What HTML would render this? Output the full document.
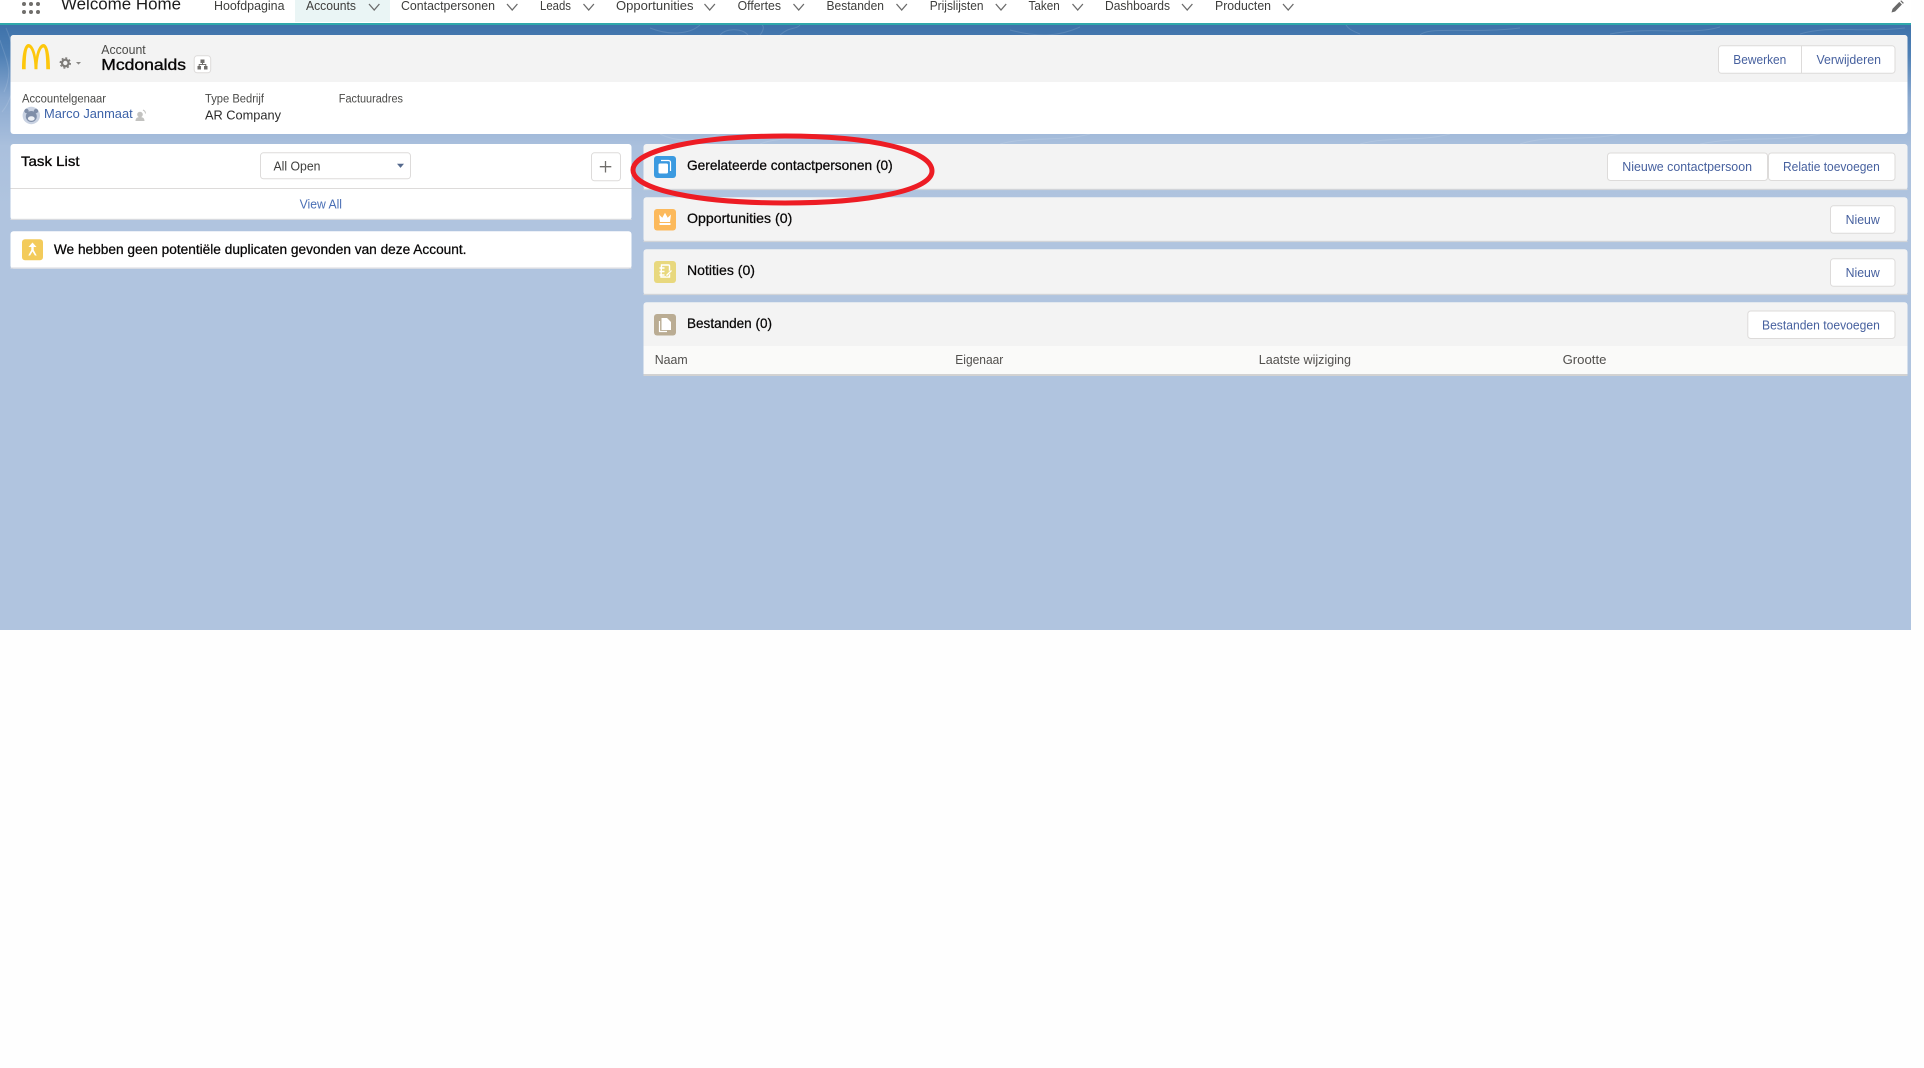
<!DOCTYPE html>
<html lang="nl">
<head>
<meta charset="utf-8">
<title>Mcdonalds</title>
<style>
html,body{margin:0;padding:0;background:#fff;width:1924px;height:1068px;overflow:hidden}
svg{display:block;filter:blur(.3px)}
text{font-family:"Liberation Sans",sans-serif}
.nav{font-size:13px;fill:#3e3e3c}
.lbl{font-size:11.5px;fill:#4a4a48}
.btn{font-size:13px;fill:#47619f}
.ttl{font-size:14px;fill:#080707;stroke:#080707;stroke-width:.25}
.th{font-size:12.5px;fill:#514f4d}
.chev{fill:none;stroke:#6b6b6b;stroke-width:1.3}
</style>
</head>
<body>
<svg xmlns="http://www.w3.org/2000/svg" width="1924" height="1068" viewBox="0 0 1924 1068">
<defs>
<linearGradient id="bg" x1="0" y1="25" x2="0" y2="630" gradientUnits="userSpaceOnUse">
<stop offset="0" stop-color="#3e72aa"/>
<stop offset=".05" stop-color="#4f80b5"/>
<stop offset=".12" stop-color="#8aa9d0"/>
<stop offset=".2" stop-color="#aac0dd"/>
<stop offset=".3" stop-color="#b0c4df"/>
<stop offset="1" stop-color="#b0c4df"/>
</linearGradient>
</defs>

<rect width="1924" height="1068" fill="#fefefe"/>
<!-- page background -->
<rect x="0" y="25" width="1911" height="605" fill="url(#bg)"/>
<g fill="none" stroke="#fff" stroke-opacity=".13" stroke-width="1">
<path d="M0 40C6 60 14 70 4 92M6 28C16 50 20 90 2 112M650 28C670 36 690 34 700 25M720 35C726 28 742 28 748 35M760 35C764 30 764 26 762 25M780 35C790 26 796 30 800 25M1010 30C1040 38 1060 36 1080 27M1360 34C1350 30 1348 28 1346 25M1420 35C1430 26 1470 34 1520 28M1610 34C1650 26 1690 36 1720 27M1800 34C1830 25 1860 33 1905 28"/>
<path d="M660 134C680 144 700 140 720 134M760 144C780 136 810 140 840 135M1000 144C1030 136 1060 142 1090 134M1360 144C1390 136 1420 142 1450 134M1520 144C1550 134 1580 142 1620 134M1700 144C1740 136 1780 142 1820 134"/>
</g>

<!-- top nav -->
<rect x="0" y="0" width="1911" height="23" fill="#fff"/>
<rect x="0" y="23" width="1911" height="2" fill="#2fa8ab"/>
<rect x="295" y="0" width="95" height="22" fill="#eaf5f5"/>
<g fill="#706e6b">
<circle cx="24" cy="4" r="2"/><circle cx="31" cy="4" r="2"/><circle cx="38" cy="4" r="2"/>
<circle cx="24" cy="12" r="2"/><circle cx="31" cy="12" r="2"/><circle cx="38" cy="12" r="2"/>
</g>
<text x="61" y="9.5" font-size="17" fill="#1c1c1c" textLength="120" lengthAdjust="spacingAndGlyphs">Welcome Home</text>
<text class="nav" x="214" y="10" textLength="70.5" lengthAdjust="spacingAndGlyphs">Hoofdpagina</text>
<text class="nav" x="306" y="10" textLength="50" lengthAdjust="spacingAndGlyphs">Accounts</text>
<text class="nav" x="401" y="10" textLength="94" lengthAdjust="spacingAndGlyphs">Contactpersonen</text>
<text class="nav" x="540" y="10" textLength="31" lengthAdjust="spacingAndGlyphs">Leads</text>
<text class="nav" x="616" y="10" textLength="77.5" lengthAdjust="spacingAndGlyphs">Opportunities</text>
<text class="nav" x="737.6" y="10" textLength="43.4" lengthAdjust="spacingAndGlyphs">Offertes</text>
<text class="nav" x="826.5" y="10" textLength="57.5" lengthAdjust="spacingAndGlyphs">Bestanden</text>
<text class="nav" x="929.7" y="10" textLength="53.8" lengthAdjust="spacingAndGlyphs">Prijslijsten</text>
<text class="nav" x="1028.5" y="10" textLength="31.3" lengthAdjust="spacingAndGlyphs">Taken</text>
<text class="nav" x="1105" y="10" textLength="65" lengthAdjust="spacingAndGlyphs">Dashboards</text>
<text class="nav" x="1215" y="10" textLength="56" lengthAdjust="spacingAndGlyphs">Producten</text>
<g class="chev">
<path d="M369 4l5.200 6 5.200-6"/><path d="M507 4l5.200 6 5.200-6"/><path d="M583.500 4l5.200 6 5.200-6"/>
<path d="M704.500 4l5.200 6 5.200-6"/><path d="M793.500 4l5.200 6 5.200-6"/><path d="M896.500 4l5.200 6 5.200-6"/>
<path d="M995.800 4l5.200 6 5.200-6"/><path d="M1072.500 4l5.200 6 5.200-6"/><path d="M1182 4l5.200 6 5.200-6"/><path d="M1283 4l5.200 6 5.200-6"/>
</g>
<path d="M1891.500 12.500l1-3.600 6.800-7 2.600 2.600-6.800 7zM1900.300 1l1-.6 2.500 2.500-.8 1z" fill="#6a6a6a"/>

<!-- account card -->
<rect x="10.500" y="35" width="1897" height="99" rx="3" fill="#fff"/>
<path d="M10.500 82V38a3 3 0 0 1 3-3H1904.500a3 3 0 0 1 3 3V82z" fill="#f3f3f3"/>
<path d="M22 69.300C22 55 24 44 28.500 44C32 44 35 50 36 57C37 50 40 44 43.500 44C48 44 50 55 50 69.300H46.300C46.300 58 45.500 47.500 43.300 47.500C41 47.500 37.500 56 37.500 69.300H34.500C34.500 56 31 47.500 28.700 47.500C26.500 47.500 25.700 58 25.700 69.300Z" fill="#fdc70c"/>
<circle cx="65.300" cy="63" r="3.300" fill="none" stroke="#7d7b78" stroke-width="2.200"/>
<circle cx="65.300" cy="63" r="5" fill="none" stroke="#7d7b78" stroke-width="1.400" stroke-dasharray="2 1.900"/>
<path d="M76 62h5l-2.500 2.600z" fill="#8a8886"/>
<text x="101.300" y="54" font-size="12.500" fill="#4a4a48" textLength="44.400" lengthAdjust="spacingAndGlyphs">Account</text>
<text x="101.300" y="70" font-size="16" fill="#080707" stroke="#080707" stroke-width=".35" textLength="84.700" lengthAdjust="spacingAndGlyphs">Mcdonalds</text>
<rect x="194.200" y="55.800" width="16.500" height="17" rx="3" fill="#fff" stroke="#dddbda"/>
<g fill="#706e6b"><rect x="200.500" y="59.500" width="4" height="3.500"/><rect x="197.500" y="66" width="3.500" height="3.500"/><rect x="204" y="66" width="3.500" height="3.500"/></g>
<path d="M202.500 63v1.500M199.200 66v-1.500h6.600V66" fill="none" stroke="#706e6b"/>

<text class="lbl" x="22" y="102.500" textLength="84" lengthAdjust="spacingAndGlyphs">Accountelgenaar</text>
<text class="lbl" x="205" y="102.500" textLength="59" lengthAdjust="spacingAndGlyphs">Type Bedrijf</text>
<text class="lbl" x="338.800" y="102.500" textLength="64.200" lengthAdjust="spacingAndGlyphs">Factuuradres</text>
<circle cx="31.300" cy="115.500" r="8.700" fill="#c9d2e2"/>
<circle cx="31.300" cy="116.500" r="5.500" fill="#7f8ea8"/>
<circle cx="26.500" cy="111" r="2.200" fill="#7f8ea8"/><circle cx="36" cy="111" r="2.200" fill="#7f8ea8"/>
<ellipse cx="31.300" cy="118.500" rx="3.400" ry="2.300" fill="#eef1f6"/>
<text x="44" y="118" font-size="13" fill="#3c62a8" textLength="88.700" lengthAdjust="spacingAndGlyphs">Marco Janmaat</text>
<circle cx="140" cy="114.500" r="2.800" fill="#c2c2c0"/>
<path d="M135.500 121c0-3 2-4 4.500-4s4.500 1 4.500 4z" fill="#c2c2c0"/>
<path d="M143 110c1.500.7 2.500 2 2.500 3.500" fill="none" stroke="#c3c3c1"/>
<text x="205" y="119.300" font-size="13" fill="#2b2b2b" textLength="76" lengthAdjust="spacingAndGlyphs">AR Company</text>

<rect x="1718.500" y="45.800" width="176.500" height="27.500" rx="3" fill="#fff" stroke="#dddbda"/>
<path d="M1801.500 46v27" stroke="#dddbda"/>
<text class="btn" x="1733.300" y="64" textLength="53" lengthAdjust="spacingAndGlyphs">Bewerken</text>
<text class="btn" x="1816.500" y="64" textLength="64.500" lengthAdjust="spacingAndGlyphs">Verwijderen</text>

<!-- task list -->
<rect x="10.500" y="144" width="621" height="76" rx="3" fill="#fff"/>
<rect x="10.500" y="218.800" width="621" height="1.200" fill="#d8dadf"/>
<path d="M10.500 188.500h621" stroke="#dddbda"/>
<text x="21" y="166" font-size="14" fill="#080707" stroke="#080707" stroke-width=".3" textLength="58.600" lengthAdjust="spacingAndGlyphs">Task List</text>
<rect x="260.500" y="152.800" width="150" height="26" rx="3" fill="#fff" stroke="#dddbda"/>
<text x="273.500" y="170.700" font-size="13" fill="#3e3e3c" textLength="47" lengthAdjust="spacingAndGlyphs">All Open</text>
<path d="M397 163.700h7l-3.500 4.200z" fill="#54698d"/>
<rect x="591.500" y="152.800" width="29" height="28" rx="3" fill="#fff" stroke="#dddbda"/>
<path d="M605.500 161v11.500M599.800 166.700h11.500" stroke="#706e6b" stroke-width="1.300"/>
<text x="299.600" y="208.700" font-size="12.500" fill="#4a6fb5" textLength="42.400" lengthAdjust="spacingAndGlyphs">View All</text>

<!-- duplicates -->
<rect x="10.500" y="231.300" width="621" height="37.400" rx="3" fill="#fff"/>
<rect x="10.500" y="267.500" width="621" height="1.200" fill="#d8dadf"/>
<rect x="22" y="239.300" width="21" height="21" rx="3" fill="#f3cb5b"/>
<path d="M32.500 242.500l4 4.500h-2.800v3l3 5.500h-1.800l-2.400-4-2.400 4h-1.800l3-5.500v-3h-2.800z" fill="#fff"/>
<text x="53.900" y="254" font-size="13.500" fill="#080707" stroke="#080707" stroke-width=".25" textLength="412.600" lengthAdjust="spacingAndGlyphs">We hebben geen potentiële duplicaten gevonden van deze Account.</text>

<!-- related cards -->
<rect x="643.500" y="144" width="1264" height="46" rx="3" fill="#f3f3f3"/>
<rect x="643.500" y="188.800" width="1264" height="1.300" fill="#d2d4d8"/>
<rect x="643.500" y="197.300" width="1264" height="44.700" rx="3" fill="#f3f3f3"/>
<rect x="643.500" y="240.800" width="1264" height="1.300" fill="#d2d4d8"/>
<rect x="643.500" y="249.300" width="1264" height="45.700" rx="3" fill="#f3f3f3"/>
<rect x="643.500" y="293.800" width="1264" height="1.300" fill="#d2d4d8"/>
<rect x="643.500" y="302.300" width="1264" height="73.700" rx="3" fill="#f3f3f3"/>
<rect x="643.500" y="346" width="1264" height="28" fill="#fafaf9"/>
<rect x="643.500" y="374" width="1264" height="2" fill="#d2d2d2"/>

<!-- card icons -->
<rect x="654" y="156" width="22" height="22" rx="3" fill="#3b9ae0"/>
<path d="M661 160.500h7.500a2 2 0 0 1 2 2v8.500" fill="none" stroke="#fff" stroke-width="1.200"/>
<rect x="658.500" y="163.500" width="9.500" height="10" rx="1.500" fill="#fff"/>
<rect x="654" y="209" width="22" height="21.500" rx="3" fill="#fcb95b"/>
<path d="M659 214.500l3.300 3.200 2.700-5 2.700 5 3.300-3.200-1 7.500h-10z" fill="#fff"/>
<rect x="659.500" y="223" width="11" height="2" fill="#fff"/>
<rect x="654" y="261" width="22" height="22" rx="3" fill="#e8d87e"/>
<path d="M661.500 265h7a1 1 0 0 1 1 1v11h-8.500z" fill="none" stroke="#fff" stroke-width="1.400"/>
<path d="M659.500 268h5M659.500 271.500h5M659.500 275h5" stroke="#fff" stroke-width="1.400"/>
<path d="M666 276l5.500-5.500" stroke="#e8d87e" stroke-width="2.500"/>
<path d="M666.500 275.500l5-5" stroke="#fff" stroke-width="1.300"/>
<rect x="654" y="314" width="22" height="21.500" rx="3" fill="#baac93"/>
<path d="M661.500 318h5.500l4 4v8h-9.500z" fill="#fff"/>
<path d="M659.500 321v10.500h7.500" fill="none" stroke="#fff" stroke-width="1.200"/>

<text class="ttl" x="687" y="170" textLength="205.700" lengthAdjust="spacingAndGlyphs">Gerelateerde contactpersonen (0)</text>
<text class="ttl" x="687" y="223" textLength="105.300" lengthAdjust="spacingAndGlyphs">Opportunities (0)</text>
<text class="ttl" x="687" y="275" textLength="68" lengthAdjust="spacingAndGlyphs">Notities (0)</text>
<text class="ttl" x="687" y="328" textLength="85" lengthAdjust="spacingAndGlyphs">Bestanden (0)</text>

<text class="th" x="654.700" y="364" textLength="33" lengthAdjust="spacingAndGlyphs">Naam</text>
<text class="th" x="955.300" y="364" textLength="48" lengthAdjust="spacingAndGlyphs">Eigenaar</text>
<text class="th" x="1258.800" y="364" textLength="92.200" lengthAdjust="spacingAndGlyphs">Laatste wijziging</text>
<text class="th" x="1562.600" y="364" textLength="43.800" lengthAdjust="spacingAndGlyphs">Grootte</text>

<!-- card buttons -->
<rect x="1607.500" y="153" width="160" height="27.500" rx="3" fill="#fff" stroke="#dddbda"/>
<rect x="1768.500" y="153" width="126.500" height="27.500" rx="3" fill="#fff" stroke="#dddbda"/>
<text class="btn" x="1622.300" y="171" textLength="129.700" lengthAdjust="spacingAndGlyphs">Nieuwe contactpersoon</text>
<text class="btn" x="1783" y="171" textLength="96.800" lengthAdjust="spacingAndGlyphs">Relatie toevoegen</text>
<rect x="1830.500" y="205.800" width="64.500" height="27.500" rx="3" fill="#fff" stroke="#dddbda"/>
<text class="btn" x="1845.600" y="224" textLength="34.200" lengthAdjust="spacingAndGlyphs">Nieuw</text>
<rect x="1830.500" y="258.800" width="64.500" height="27.500" rx="3" fill="#fff" stroke="#dddbda"/>
<text class="btn" x="1845.600" y="277" textLength="34.200" lengthAdjust="spacingAndGlyphs">Nieuw</text>
<rect x="1747.800" y="311" width="147.200" height="27.500" rx="3" fill="#fff" stroke="#dddbda"/>
<text class="btn" x="1762" y="329.300" textLength="117.800" lengthAdjust="spacingAndGlyphs">Bestanden toevoegen</text>

<!-- red annotation -->
<path d="M633 170C633 150 700 136 785 136C870 136 932 150 932 171C932 190 870 203 785 203C700 203 633 190 633 170Z" fill="none" stroke="#ed1c24" stroke-width="5"/>
</svg>
</body>
</html>
